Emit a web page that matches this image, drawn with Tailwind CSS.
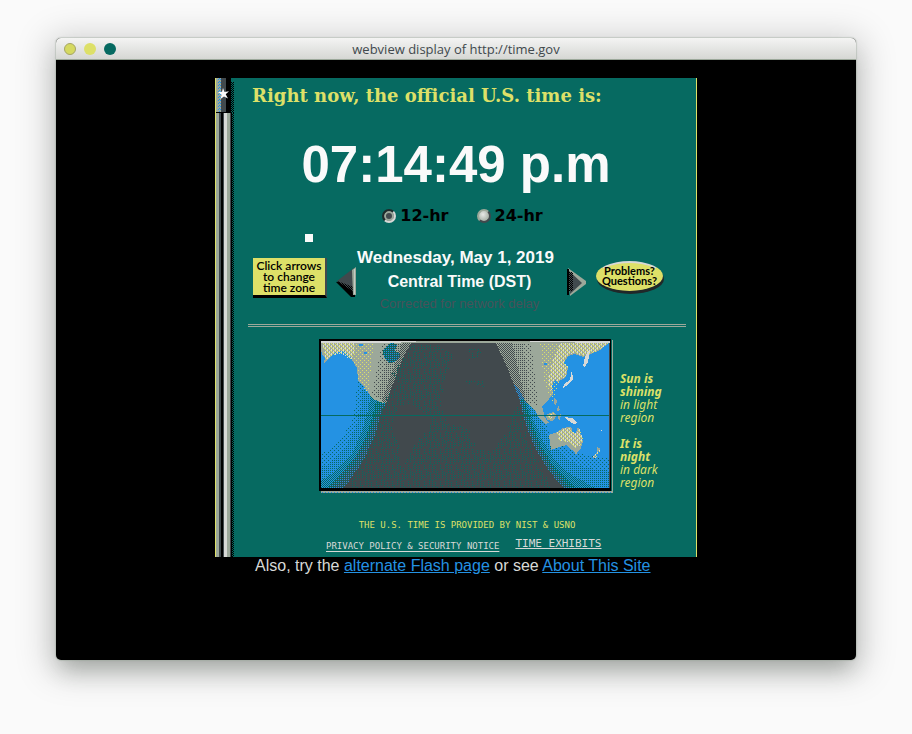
<!DOCTYPE html>
<html lang="en">
<head>
<meta charset="utf-8">
<meta name="viewport" content="width=device-width, initial-scale=1">
<title>webview display of http://time.gov</title>
<script src="https://cdn.jsdelivr.net/npm/@tailwindcss/browser@4"></script>
</head>
<body class="min-h-screen bg-[#fafafa] px-14 pt-[38px] pb-[74px] font-['Liberation_Sans',sans-serif]">
<div class="flex min-h-[622px] flex-col overflow-hidden rounded-[5px] bg-black shadow-[0_0_1px_1px_#9ca89a66,0_6px_34px_8px_#0000002c,0_14px_22px_-6px_#30403050]">
  <header class="grid h-[22px] grid-cols-[80px_1fr_80px] items-center border-b border-[#9ca89a] bg-linear-to-b from-[#f4f4f3] to-[#d6d7d4] px-2">
    <div class="flex gap-2">
      <button aria-label="Close" class="size-3 rounded-full border border-[#a5a565] bg-[#d5d961]"></button>
      <button aria-label="Minimize" class="size-3 rounded-full bg-[#dde068]"></button>
      <button aria-label="Zoom" class="size-3 rounded-full bg-[#066a61]"></button>
    </div>
    <div class="text-center font-['Open_Sans',sans-serif] text-[13px] leading-5 text-[#41494d]">webview display of http://time.gov</div>
  </header>

  <main class="mx-auto mt-[18px] w-full max-w-[482px]">
    <div class="flex border-r border-[#dde068] bg-[#066a61]">
      <!-- Flagpole -->
      <div class="flex w-5 shrink-0 flex-col">
        <svg class="h-[35px] w-5" viewBox="0 0 20 35" shape-rendering="crispEdges" aria-hidden="true">
          <defs>
            <pattern id="sh" width="2" height="2" patternUnits="userSpaceOnUse"><path d="M0 0h1v1H0zM1 1h1v1H1z"/></pattern>
            <pattern id="bl" width="2" height="3" patternUnits="userSpaceOnUse"><path fill="#2492e3" d="M0 0h1v1H0zM1 1h1v1H1z"/></pattern>
          </defs>
          <path fill="#9ca89a" d="M0 0h6v35H0z"/><path fill="#dde068" d="M0 0h1v35H0z"/>
          <path fill="#41494d" d="M6 0h6v35H6z"/><path d="M11 0h5v35h-5z"/>
          <path fill="url(#bl)" d="M3 0h3v35H3z"/><path fill="url(#sh)" d="M16 4h3v31h-3z"/>
          <path shape-rendering="auto" fill="#fafafa" d="M8 10l1.500 4 4.500-.7-3.300 3 2.300 4.200-4-2L5.500 21l1-4.300L3 14l4-.2z"/>
          <path d="M1 34h15v1H1z"/>
        </svg>
        <svg class="min-h-0 w-5 flex-1" viewBox="0 0 20 444" preserveAspectRatio="none" shape-rendering="crispEdges" aria-hidden="true">
          <path fill="#dde068" d="M0 0h1v444H0z"/><path fill="#9ca89a" d="M1 0h3v444H1z"/>
          <path fill="#41494d" d="M4 0h3v444H4z"/><path d="M6 0h2v444H6z"/>
          <path fill="#41494d" d="M8 0h1v444H8z"/>
          <path fill="#d8d9d7" d="M9 0h4v444H9z"/><path fill="#9ca89a" d="M12 0h3v444h-3z"/>
          <path fill="#41494d" d="M15 0h1v444h-1z"/><path d="M16 0h1v444h-1z"/><path fill="url(#sh)" d="M17 0h2v444h-2z"/>
        </svg>
      </div>

      <div class="min-w-0 flex-1 pt-[5px] pr-[10px] pb-[5px] pl-[13px]">
        <h1 class="pl-1 font-['DejaVu_Serif',serif] text-[18px] leading-[26px] font-bold whitespace-nowrap text-[#dde068]">Right now, the official U.S. time is:</h1>
        <div class="mt-[30px] pr-[22px] text-center text-[51px] leading-[52px] font-bold whitespace-nowrap text-[#fafafa]">07:14:49 p.m</div>

        <div class="mt-[15px] flex h-5 items-center justify-center gap-7 pr-[9px] font-['DejaVu_Sans',sans-serif] text-[16px] text-black">
          <label class="flex items-center gap-1"><input type="radio" name="fmt" checked class="size-[14px] appearance-none rounded-full border-2 border-[#1d2b2b] border-r-[#d8d9d7] border-b-[#d8d9d7] bg-[#41494d] shadow-[inset_0_0_0_2px_#9ca89a]"><b>12-hr</b></label>
          <label class="flex items-center gap-1"><input type="radio" name="fmt" class="size-[14px] appearance-none rounded-full border-2 border-[#9ca89a] border-r-[#41494d] border-b-[#41494d] bg-radial-[at_40%_35%] from-[#e8e9e7] to-[#8f9b8e]"><b>24-hr</b></label>
        </div>

        <div class="mt-2 ml-[57px] size-2 bg-[#fafafa]"></div>

        <div class="mt-1 flex h-[68px] items-start pr-[23px] pl-[5px]">
          <div class="mt-3 w-[74px] shrink-0 border-r-2 border-b-3 border-r-[#41494d] border-b-black bg-[#dde068] pt-[2px] pb-[2px] text-center font-['Lato',sans-serif] text-[12px] leading-[11px] font-semibold whitespace-nowrap text-black">Click arrows<br>to change<br>time zone</div>
          <button aria-label="Previous time zone" class="mt-[21px] ml-[9px] shrink-0">
            <svg class="block h-[30px] w-5" viewBox="0 0 20 30"><path d="M0 15L15 30h4V12z"/><path fill="#41494d" d="M1 14L18 1v24z"/><path d="M1 14l17 14V20z" fill="url(#sh)"/><path fill="#9ca89a" d="M16 3l4-3v28h-3z"/><path fill="#c5cac3" d="M18 2h1v25h-1z"/></svg>
          </button>
          <div class="flex min-w-0 flex-1 flex-col items-center pr-3 text-[17px] leading-6 font-bold whitespace-nowrap text-[#fafafa]">
            <p>Wednesday, May 1, 2019</p>
            <p class="pl-2 text-[16px]">Central Time (DST)</p>
            <p class="pl-2 text-[13px] leading-5 font-normal text-[#47525a]">Corrected for network delay</p>
          </div>
          <button aria-label="Next time zone" class="mt-[22px] shrink-0">
            <svg class="block h-[28px] w-[19px]" viewBox="0 0 19 28"><path fill="#9ca89a" d="M1 0l18 13v3L3 28z"/><path fill="#41494d" d="M1 2l14 13L3 26z"/><path d="M0 1h2v26H0z"/><path fill="url(#sh)" d="M2 4h4v19H2z"/></svg>
          </button>
          <button class="mt-[15px] ml-[10px] h-[30px] w-[67px] shrink-0 rounded-[50%] border-2 border-[#dde068] border-t-[#d8d9d7] bg-[#dde068] font-['Lato',sans-serif] text-[11px] leading-[10px] font-bold text-black shadow-[1px_3px_0_#202829]"><span class="-mx-2 block">Problems?<br>Questions?</span></button>
        </div>

        <hr class="mt-[10px] h-[3px] border-y border-[#9ca89a]">

        <div class="mt-3 flex pl-[71px]">
          <svg class="h-[155px] w-[294px] shrink-0" viewBox="319 339 294 155" role="img" aria-label="World map of day and night">
            <defs>
              <pattern id="yl" width="4" height="4" patternUnits="userSpaceOnUse"><path fill="#dde068" d="M0 0h1v1H0zM1 1h1v1H1zM2 2h1v1H2zM3 3h1v1H3z"/><path fill="#d8d9d7" d="M3 1h1v1H3zM1 3h1v1H1zM3 2h1v1H3zM1 0h1v1H1z"/></pattern>
              <pattern id="y2" width="4" height="4" patternUnits="userSpaceOnUse"><path fill="#dde068" d="M0 0h1v1H0zM2 2h1v1H2z"/></pattern>
              <pattern id="t1" width="4" height="4" patternUnits="userSpaceOnUse"><path fill="#066a61" d="M0 0h1v1H0zM2 2h1v1H2z"/></pattern>
              <pattern id="t2" width="2" height="2" patternUnits="userSpaceOnUse"><path fill="#066a61" d="M0 0h1v1H0z"/></pattern>
              <pattern id="t3" width="2" height="2" patternUnits="userSpaceOnUse"><path fill="#066a61" d="M0 0h1v1H0zM1 1h1v1H1z"/></pattern>
              <pattern id="t4" width="2" height="2" patternUnits="userSpaceOnUse"><path fill="#066a61" d="M0 0h2v1H0zM1 1h1v1H1z"/></pattern>
              <pattern id="g1" width="4" height="4" patternUnits="userSpaceOnUse"><path fill="#41494d" d="M0 0h1v1H0zM2 2h1v1H2z"/></pattern>
              <pattern id="g2" width="2" height="2" patternUnits="userSpaceOnUse"><path fill="#41494d" d="M0 0h1v1H0z"/></pattern>
              <pattern id="g3" width="2" height="2" patternUnits="userSpaceOnUse"><path fill="#41494d" d="M0 0h1v1H0zM1 1h1v1H1z"/></pattern>
              <pattern id="tn" width="16" height="16" patternUnits="userSpaceOnUse"><path fill="none" stroke="#066a61" stroke-dasharray="1 1" d="M.5 0v9M3.500 2v7M5.500 7v9M8.500 1v6M10.500 5v10M13.500 0v5M14.500 9v7M2.500 11v5M7.500 11v4M12.500 8v4"/></pattern>
              <clipPath id="map"><path d="M321 341h289v147H321z"/></clipPath>
            </defs>
            <path fill="#9ca89a" d="M321 491h291v-151h1v153H321z"/>
            <path fill="none" stroke="#2492e3" stroke-dasharray="1 2" d="M322 492.500H612"/>
            <path d="M319 339h292v152H319z"/>
            <g clip-path="url(#map)" shape-rendering="crispEdges">
              <path fill="#2492e3" d="M321 341h290v148H321z"/>
              <!-- Twilight over the oceans -->
              <path fill="url(#t1)" d="M357 380L356 405L350 425L340 440L321 455V488H420V380zM529 396L540 412L552 436L566 448L585 455L610 458V488H500V396z"/>
              <path fill="url(#t2)" d="M363 385L361 408L355 428L346 448L332 462L321 468V488H420V385zM527 397L538 415L549 439L563 457L582 467L610 471V488H500V397z"/>
              <path fill="url(#t3)" d="M371 394L368 411L362 431L352 454L334 473L321 480V488H420V394zM526 398L533 419L544 443L557 463L573 476L596 488H500V398z"/>
              <path fill="url(#t4)" d="M377 398L373 414L367 434L356 457L338 477L326 488H420V398zM524 399L531 421L541 446L555 468L569 482L576 488H500V399z"/>
              <!-- Land -->
              <path fill="#9ca89a" d="M321 341h100v35l-33 28-5-1-10-4-8-11-7-8-1-12-6-10-7-7-9 1-6 6-5 5 1-6-3-2-1-7zM490 343h119l-9 7-9 4-8 3-8-3-7 2-4 7 4 5-2 9-8 5-3-2-3 5 1 9-7 9-4 3 2 8-3 4-4-5-6-7-6-5-5-10-20-20z"/>
              <path fill="url(#y2)" d="M340 342h34l-6 52-10-14-1-12-5-10zM540 343h30l-17 60-9-20z"/>
              <path fill="url(#yl)" d="M322 342h33l-2 18-5-2-6-4-9 1-7 5-2-9zM560 343h49l-12 8-14 5-8-3-7 2-4 7 4 5-2 9-8 5-3-2-3 5 1 9-5-10 4-20z"/>
              <path fill="#d8d9d7" d="M588 351l2-1-2 12-3 5-2-1 2-9zM572 370l1 9-5 6-5 3 1-4 6-4z"/>
              <path fill="#2492e3" d="M359 344h4v2h-4zM364 352h3v2h-3zM544 363h3v2h-3z"/>
              <path fill="#2492e3" d="M383 351l7-8 7 1-2 7 6 3-4 7-7 2-6-5z"/><path fill="url(#t4)" d="M383 351l7-8 7 1-2 7 6 3-4 7-7 2-6-5z"/>
              <path fill="#9ca89a" d="M535 407l8 8 6 8-4 1-8-9zM546 415l7-3 4 3-4 6-6-1zM558 415l3-1-1 6-2-1zM554 398l3 3-1 5-2-2zM558 405l2 5-3 1zM549 435l8-3 6-4 6-1 3 1v4l4 1 2-6 3 8 2 7-2 6-3 4-7-2-4-5-8 2-8 3zM574 451h4l-2 4zM597 447l4 2-4 3zM593 456l4-3-3 6z"/>
              <path fill="url(#yl)" d="M557 432l12-5 3 5 5 1 2-5 4 10-2 7-6 3-7-6-9-1zM546 415l8-2-3 6zM592 457l9-8-5 9z"/>
              <path fill="#d8d9d7" d="M564 417l8 1 6 5-4 1-7-4zM601 430h1v1h-1z"/>
              <!-- Twilight over land -->
              <path fill="url(#g1)" d="M382 343l-10 50 10 8 30-58zM499 343h32l7 62-13-2z"/>
              <path fill="url(#g2)" d="M391 343l-14 54 6 6 33-60zM497 343h26l7 58-6 2z"/>
              <path fill="url(#g3)" d="M402 343l-20 58 6 3 30-61zM497 343h15l13 54-6 4z"/>
              <!-- Night region -->
              <path fill="url(#g2)" d="M382 403L374 418L366 438L351 463L328 488H571L556 471L541 448L530 423L523 402z"/>
              <path fill="url(#g3)" d="M384 403L377 418L370 438L356 463L335 488H567L553 471L538 448L527 423L521 400z"/>
              <path fill="#41494d" d="M411 343L402 360L393 384L386 403L380 418L374 438L362 463L344 488H563L549 471L535 448L525 423L519 398L507 367L496 343z"/>
              <path fill="url(#tn)" d="M403 358l8-13 26 0 16 9-8 26-5 24 8 20 20 4 10 22 15 0 14-20 4-14 8-12 0 0 8 34 25 50H348l24-44 12-40 2-8 14-12-8-10zM463 380l22 1 0 6-16-3zM468 348l14 0-2 8-12 4z"/>
              <path fill="#41494d" d="M398 406l14-2 20 14-4 10-12 14-8 16-7 14-2-26-6-18z"/>
              <path fill="#066a61" d="M321 415h288v1H321z"/>
              <path fill="#d8d9d7" d="M321 341h95v1h-15v1h-80zM530 341h80v2h-35v-1h-45z"/><path fill="#9ca89a" d="M401 342h15v-1h114v1h45v1H401z"/>
              <path fill="#41494d" d="M609 343h1v145h-1z"/>
            </g>
          </svg>
          <div class="pt-[33px] pl-[7px] font-['Noto_Sans',sans-serif] text-[12px] leading-[13px] whitespace-nowrap text-[#dde068] italic">
            <p><b>Sun is<br>shining</b><br>in light<br>region</p>
            <p class="mt-[13px]"><b>It is<br>night</b><br>in dark<br>region</p>
          </div>
        </div>

        <p class="mt-[25px] text-center font-['DejaVu_Sans_Mono',monospace] text-[9px] leading-3 whitespace-nowrap text-[#dde068]">THE U.S. TIME IS PROVIDED BY NIST &amp; USNO</p>
        <p class="mt-[7px] flex items-start gap-4 pl-[78px] font-['DejaVu_Sans_Mono',monospace] text-[9px] leading-3 whitespace-nowrap text-[#d8d9d7]">
          <a href="#privacy" class="mt-[2px] underline underline-offset-2">PRIVACY POLICY &amp; SECURITY NOTICE</a>
          <a href="#exhibits" class="text-[11px] underline underline-offset-1">TIME EXHIBITS</a>
        </p>
      </div>
    </div>
    <p class="pl-10 text-[16px] leading-[18px] text-[#d8d9d7]">Also, try the <a href="#flash" class="text-[#2492e3] underline">alternate Flash page</a> or see <a href="#about" class="text-[#2492e3] underline">About This Site</a></p>
  </main>
</div>
</body>
</html>
